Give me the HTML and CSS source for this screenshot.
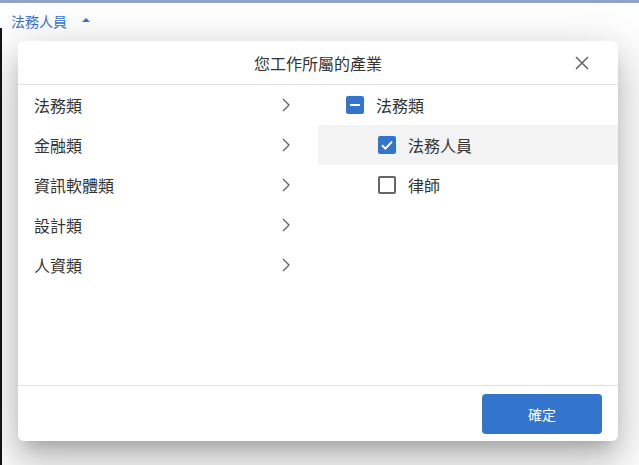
FILE: index.html
```html
<!DOCTYPE html>
<html lang="zh-Hant">
<head>
<meta charset="utf-8">
<title>產業選擇</title>
<link rel="stylesheet" href="styles.css">
</head>
<body>
<div class="topbar"></div>
<div class="field">
  <span class="field-value">法務人員</span>
  <span class="caret"></span>
</div>

<div class="dialog">
  <div class="dialog-header">
    <span></span>
    <h1 class="dialog-title">您工作所屬的產業</h1>
    <button class="close" aria-label="close">
      <svg width="14" height="14" viewBox="0 0 14 14"><path d="M1 1 L13 13 M13 1 L1 13" stroke="#666" stroke-width="1.6" fill="none"/></svg>
    </button>
  </div>
  <div class="dialog-body">
    <ul class="categories">
      <li class="cat"><span>法務類</span><svg class="chev" width="8" height="14" viewBox="0 0 8 14"><path d="M1 1 L7 7 L1 13" stroke="#666" stroke-width="1.4" fill="none"/></svg></li>
      <li class="cat"><span>金融類</span><svg class="chev" width="8" height="14" viewBox="0 0 8 14"><path d="M1 1 L7 7 L1 13" stroke="#666" stroke-width="1.4" fill="none"/></svg></li>
      <li class="cat"><span>資訊軟體類</span><svg class="chev" width="8" height="14" viewBox="0 0 8 14"><path d="M1 1 L7 7 L1 13" stroke="#666" stroke-width="1.4" fill="none"/></svg></li>
      <li class="cat"><span>設計類</span><svg class="chev" width="8" height="14" viewBox="0 0 8 14"><path d="M1 1 L7 7 L1 13" stroke="#666" stroke-width="1.4" fill="none"/></svg></li>
      <li class="cat"><span>人資類</span><svg class="chev" width="8" height="14" viewBox="0 0 8 14"><path d="M1 1 L7 7 L1 13" stroke="#666" stroke-width="1.4" fill="none"/></svg></li>
    </ul>
    <ul class="options">
      <li class="opt parent">
        <span class="box filled"><span class="dash"></span></span>
        <span>法務類</span>
      </li>
      <li class="opt child hover">
        <span class="box filled"><svg width="18" height="18" viewBox="0 0 18 18"><path d="M4 9.3 L7.4 12.6 L14 5.6" stroke="#fff" stroke-width="2" fill="none"/></svg></span>
        <span>法務人員</span>
      </li>
      <li class="opt child">
        <span class="box empty"></span>
        <span>律師</span>
      </li>
    </ul>
  </div>
  <div class="dialog-footer">
    <button class="confirm">確定</button>
  </div>
</div>
</body>
</html>
```

FILE: styles.css
```css
* { box-sizing: border-box; }
html, body { margin: 0; padding: 0; }
body {
  width: 639px;
  height: 465px;
  overflow: hidden;
  font-family: "Noto Sans CJK TC", "Noto Sans", sans-serif;
  color: #333;
  background: linear-gradient(#151515, #151515) no-repeat 0 28px / 2px 100%, #fff;
  position: relative;
}
.topbar {
  height: 3px;
  background: #8fa3c7;
}
.field {
  height: 36px;
  display: flex;
  align-items: center;
  padding-left: 11px;
}
.field-value {
  font-size: 14px;
  color: #3475cc;
  line-height: 1;
}
.caret {
  margin-left: 15px;
  width: 0;
  height: 0;
  border-left: 4px solid transparent;
  border-right: 4px solid transparent;
  border-bottom: 4px solid #3475cc;
  margin-top: -2px;
}
.dialog {
  position: absolute;
  left: 18px;
  top: 41px;
  width: 600px;
  height: 400px;
  background: #fff;
  border-radius: 6px;
  display: flex;
  flex-direction: column;
  box-shadow: 0 11px 15px -7px rgba(0,0,0,.2), 0 24px 38px 3px rgba(0,0,0,.14), 0 9px 46px 8px rgba(0,0,0,.12);
}
.dialog-header {
  flex: none;
  height: 44px;
  border-bottom: 1px solid #e0e0e0;
  display: grid;
  grid-template-columns: 1fr auto 1fr;
  align-items: center;
  padding-right: 24px;
  padding-left: 24px;
}
.dialog-title {
  margin: 0;
  font-size: 16px;
  font-weight: normal;
  color: #333;
  line-height: 1;
  margin-top: 1px;
}
.close {
  justify-self: end;
  width: 24px;
  height: 24px;
  border: 0;
  background: none;
  padding: 0;
  display: flex;
  align-items: center;
  justify-content: center;
}
.dialog-body {
  flex: 1;
  display: grid;
  grid-template-columns: 300px 300px;
  align-items: start;
  border-bottom: 1px solid #e0e0e0;
}
ul { list-style: none; margin: 0; padding: 0; }
.cat {
  height: 40px;
  display: flex;
  align-items: center;
  justify-content: space-between;
  padding-left: 16px;
  padding-right: 28px;
  font-size: 16px;
  color: #333;
}
.opt {
  height: 40px;
  display: flex;
  align-items: center;
  gap: 12px;
  font-size: 16px;
  color: #333;
}
.opt.parent { padding-left: 28px; }
.opt.child { padding-left: 60px; }
.opt.hover { background: #f3f3f3; }
.box {
  width: 18px;
  height: 18px;
  border-radius: 2px;
  display: flex;
  align-items: center;
  justify-content: center;
  flex: none;
}
.box.filled { background: #3375cc; }
.box.empty { border: 2px solid #666; }
.dash {
  width: 10px;
  height: 2px;
  background: #fff;
}
.dialog-footer {
  flex: none;
  height: 55px;
  display: flex;
  align-items: center;
  justify-content: flex-end;
  padding-right: 16px;
}
.confirm {
  width: 120px;
  height: 40px;
  border: 0;
  border-radius: 4px;
  background: #3375cc;
  color: #fff;
  font-family: "Noto Sans CJK TC", "Noto Sans", sans-serif;
  font-size: 14px;
}
```
